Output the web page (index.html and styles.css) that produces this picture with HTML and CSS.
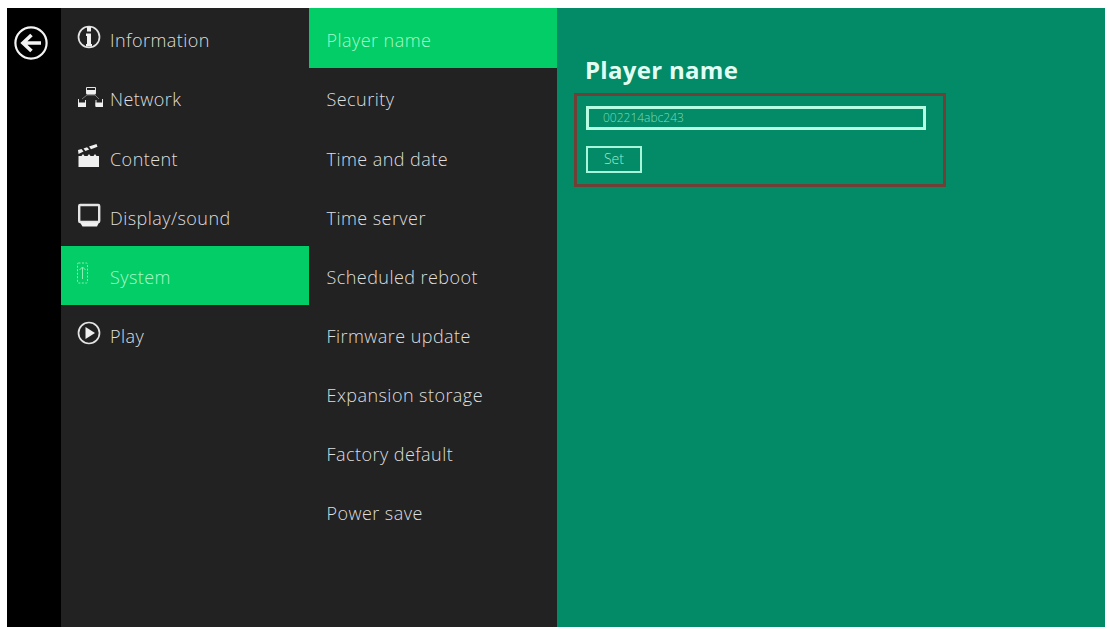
FILE: index.html
```html
<!DOCTYPE html>
<html lang="en">

<head>
  <meta charset="utf-8">
  <title>Player settings</title>
  <link rel="stylesheet" href="styles.css">
</head>

<body>
  <div class="app">
    <div class="rail">
      <svg class="back" viewBox="0 0 34 34">
        <circle cx="17" cy="17" r="15.6" />
        <path d="M27 17H9M17.500 9l-8.500 8 8.500 8" />
      </svg>
    </div>

    <nav class="menu">
      <a class="item">
        <svg class="icon" viewBox="0 0 26 24">
          <circle class="line" cx="12" cy="12" r="10.500" />
          <path class="fill" d="M10 2h4v4.500h-4zM9 8.500h5V19h1v2.500H9V19h1v-8H9z" />
        </svg>
        <span>Information</span>
      </a>
      <a class="item">
        <svg class="icon" viewBox="0 0 26 24">
          <path class="thin" d="M9.500 2.500h9v6h-9zM1.500 14v7h7v-6M19 15v6h6.500v-7" />
          <path class="thin dim" d="M5 14l5-4h8l4 4" />
          <path class="fill" d="M9.500 5h9v4.500h-9zM1 17.500h8V22H1zM18.500 17.500H26V22h-7.500z" />
        </svg>
        <span>Network</span>
      </a>
      <a class="item">
        <svg class="icon" viewBox="0 0 26 24">
          <path class="fill" d="M1.500 12h3l1.500-2 1.500 2h3l1.500-2 1.500 2h3l1.500-2 1.500 2H22v11H1.500z" />
          <path class="fill" d="M1 6l3.500-1 2 2.500L1.500 10zM6.500 4.400L10 3.200l2.200 2.400-3.800 1.400zM12 2.500L19.500 0l1 2.700-6.500 2.500z" />
        </svg>
        <span>Content</span>
      </a>
      <a class="item">
        <svg class="icon" viewBox="0 0 26 24">
          <rect class="thick" x="2.200" y="2" width="20" height="17" rx="1" />
          <path class="fill" d="M3 19.500h19l-2 4H5.500z" />
        </svg>
        <span>Display/sound</span>
      </a>
      <a class="item active">
        <svg class="icon faint" viewBox="0 0 26 24">
          <rect class="dash" x="0.500" y="1" width="10" height="20" rx="1" />
          <path class="thin" d="M5.500 17V5M2.500 8l3-3 3 3" />
        </svg>
        <span>System</span>
      </a>
      <a class="item">
        <svg class="icon" viewBox="0 0 26 24">
          <circle class="line" cx="12" cy="12" r="10.500" />
          <path class="fill" d="M8.500 6l9.500 6-9.500 6z" />
        </svg>
        <span>Play</span>
      </a>
    </nav>

    <nav class="menu submenu">
      <a class="item active"><span>Player name</span></a>
      <a class="item"><span>Security</span></a>
      <a class="item"><span>Time and date</span></a>
      <a class="item"><span>Time server</span></a>
      <a class="item"><span>Scheduled reboot</span></a>
      <a class="item"><span>Firmware update</span></a>
      <a class="item"><span>Expansion storage</span></a>
      <a class="item"><span>Factory default</span></a>
      <a class="item"><span>Power save</span></a>
    </nav>

    <main class="panel">
      <h1 class="title">Player name</h1>
      <div class="highlight">
        <div class="field">002214abc243</div>
        <button class="set">Set</button>
      </div>
    </main>
  </div>
</body>

</html>
```
FILE: styles.css
```css
* {
  box-sizing: border-box;
}

body {
  margin: 0;
  padding: 8px 4px 2px 7px;
  height: 629px;
  background-color: #fff;
  font-family: "Open Sans", "Noto Sans", sans-serif;
}

.app {
  display: flex;
  height: 619px;
  background-color: #222;
}

.rail {
  width: 54px;
  padding: 18px 0 0 7px;
  background-color: #000;
}

.back {
  display: block;
  width: 34px;
  height: 34px;
  fill: none;
  stroke: #f4f4f4;
  stroke-width: 2.2;
}

.back path {
  stroke-width: 3.6;
}

.menu {
  width: 248px;
}

.item {
  display: flex;
  align-items: center;
  height: 59.1px;
  padding: 3px 0 0 16px;
  color: #dedede;
  font-size: 18px;
  font-weight: 300;
  letter-spacing: .45px;
  white-space: nowrap;
}

.item:first-child {
  height: 60.4px;
}

.submenu .item {
  padding-left: 17.5px;
}

.active,
.submenu .active {
  background-color: #03cd66;
  color: #a6f8ca;
}

.icon {
  width: 26px;
  height: 24px;
  margin: -5px 7px 0 0;
}

.line,
.thin,
.thick,
.dash {
  fill: none;
  stroke: #e4e4e4;
}

.line {
  stroke-width: 1.7;
}

.thin {
  stroke-width: 1;
}

.dim {
  stroke: #777;
}

.thick {
  stroke-width: 2.4;
}

.fill {
  fill: #f0f0f0;
}

.faint .thin,
.faint .dash {
  stroke: #86efb4;
}

.dash {
  stroke-dasharray: 2 1.5;
}

.panel {
  flex: 1;
  padding: 44px 0 0 17px;
  background-color: #038a66;
}

.title {
  margin: 0 0 6px 11px;
  color: #e2fff4;
  font-size: 24px;
  font-weight: 700;
  line-height: 35px;
  letter-spacing: .3px;
}

.highlight {
  width: 372px;
  height: 94px;
  padding: 10px 9px;
  border: 3px solid #6e4036;
}

.field {
  width: 340px;
  height: 24px;
  padding-left: 14px;
  border: 3px solid #b5fce3;
  color: #79dabb;
  font-size: 12px;
  font-weight: 300;
  line-height: 17px;
}

.set {
  display: block;
  width: 56px;
  height: 27px;
  margin-top: 16px;
  padding: 0 0 2px;
  border: 2px solid #a5f6da;
  background: none;
  color: #9debcf;
  font-family: inherit;
  font-size: 14px;
  font-weight: 300;
}
```
